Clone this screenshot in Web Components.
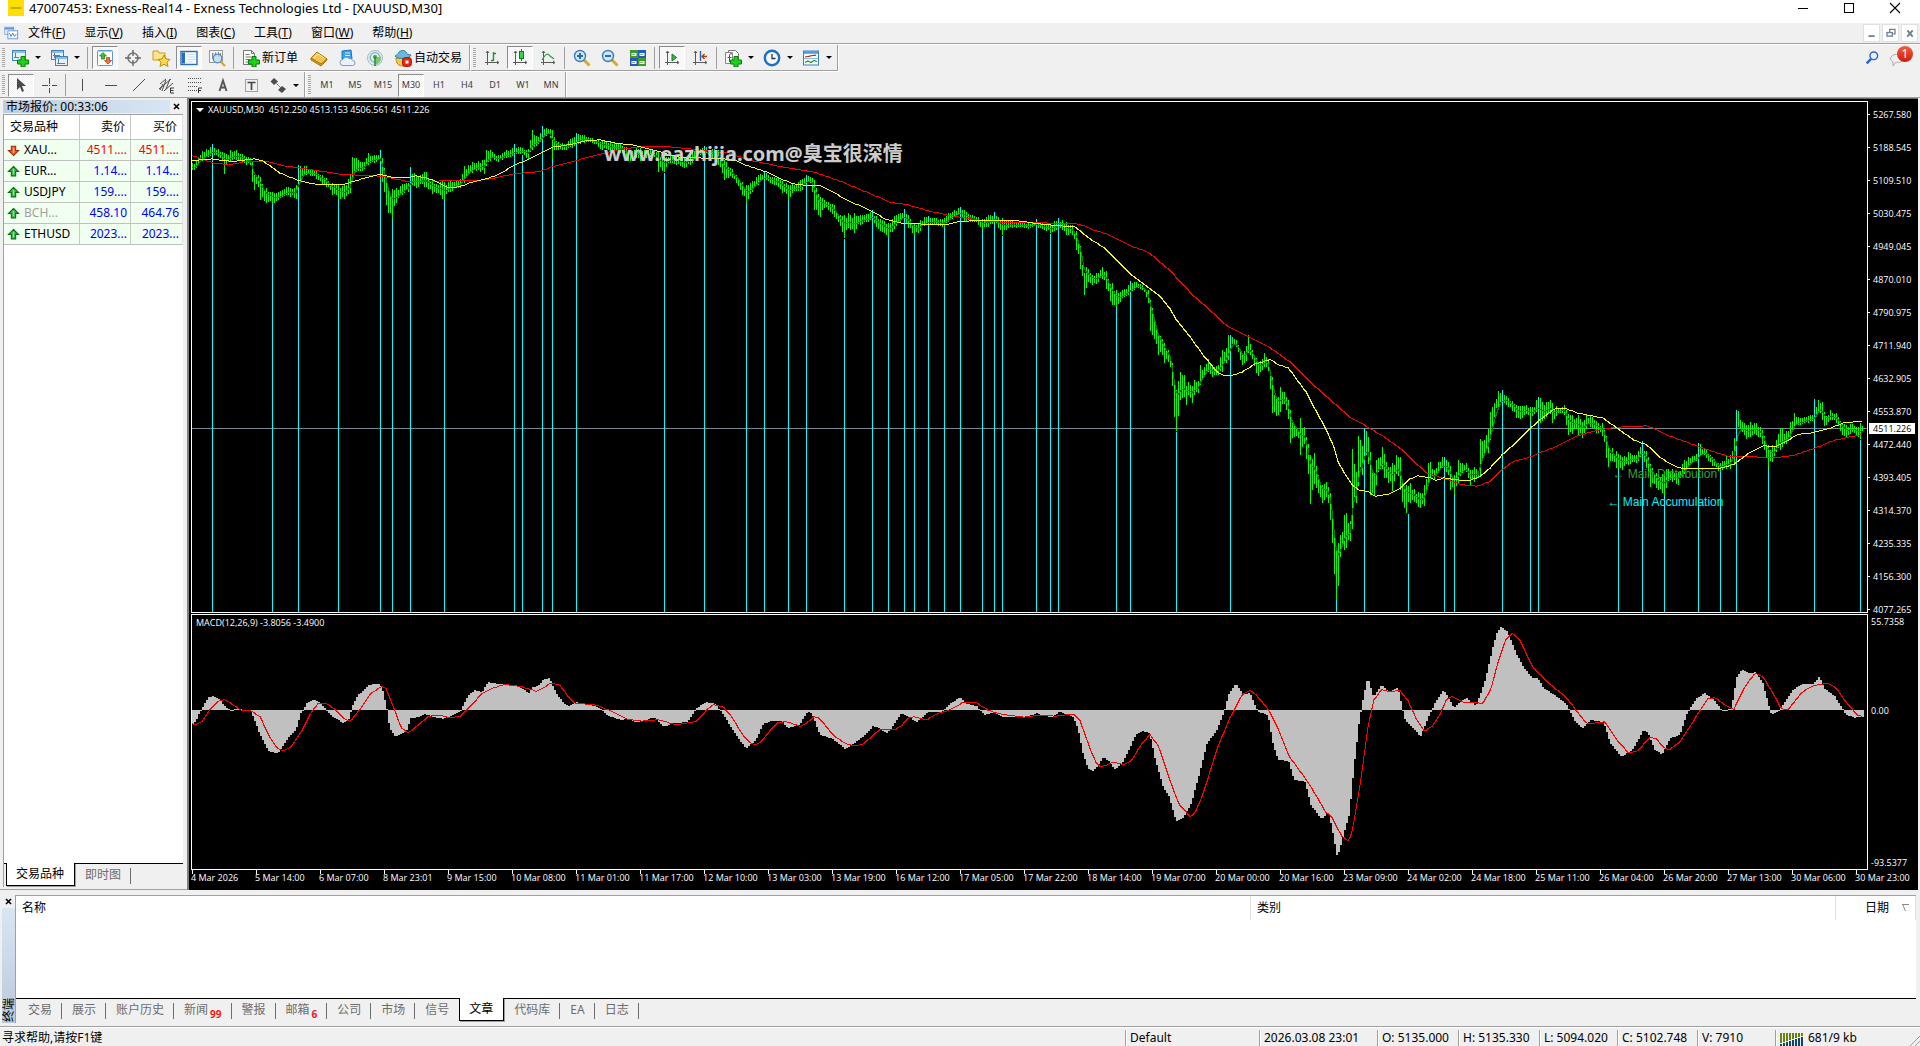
<!DOCTYPE html>
<html lang="zh-CN">
<head>
<meta charset="utf-8">
<title>47007453: Exness-Real14 - Exness Technologies Ltd - [XAUUSD,M30]</title>
<style>
html,body{margin:0;height:100%}
body{overflow:hidden;background:#f0f0f0;color:#000;font:12px/16px "Noto Sans","Noto Sans CJK SC",sans-serif}
</style>
</head>
<body>
<trade-terminal></trade-terminal>
<script>
const RESET = `:host,*{box-sizing:border-box}button{font:inherit;color:inherit;background:none;border:0;margin:0;padding:0;display:flex;align-items:center}svg{display:block}`;

function define(name, markup, setup) {
  customElements.define(name, class extends HTMLElement {
    constructor() {
      super();
      const root = this.attachShadow({ mode: 'open' });
      root.innerHTML = typeof markup === 'function' ? '' : markup;
    }
    connectedCallback() {
      if (typeof markup === 'function') this.shadowRoot.innerHTML = markup(this);
      if (setup) setup(this, this.shadowRoot);
    }
  });
}

/* ---------- icons, on an 18 x 18 grid ---------- */
const PLUS = `<path d="M10 7.500h4v3.500h3.500v4H14v3h-4v-3H6.500v-4H10z" fill="#1fd01f" stroke="#078007"/>`;
const AXES = `<path d="M4.500 2v14M2 13.500h13.500M3 4l1.500-2 1.500 2M14 12l2 1.500-2 1.500" fill="none" stroke="#5a5a5a"/>`;
const ICONS = {
  logo: `<rect width="18" height="18" fill="#ffde02"/><path d="M3 8.500h12M3 9.500h12" stroke="#7c6c10" stroke-opacity=".6" stroke-dasharray="2 .5"/>`,
  mdi: `<rect x="2" y="2.500" width="10" height="8" fill="#eaf2fc" stroke="#7fa6dc"/><path d="M2 4h10" stroke="#5b8fd8" stroke-width="2"/><rect x="5.500" y="6.500" width="11" height="9" fill="#fff" stroke="#5b8fd8"/><path d="M7 9l2 4 2-4 2 4 2-3" fill="none" stroke="#3f78cf"/>`,
  newchart: `<rect x="1.500" y="1.500" width="13" height="10" fill="#e6f1fb" stroke="#3d83ba"/><path d="M2 3h12" stroke="#8dbde3" stroke-width="2"/><path d="M4.500 4v5M3 8.500h5" stroke="#5a7d99"/>${PLUS}`,
  profiles: `<rect x="1.500" y="1.500" width="12" height="9" fill="#e6f1fb" stroke="#3d83ba"/><path d="M2 3h11" stroke="#8dbde3" stroke-width="2"/><rect x="5.500" y="7.500" width="12" height="9" fill="#e6f1fb" stroke="#3d83ba"/><path d="M6 9h11" stroke="#8dbde3" stroke-width="2"/><path d="M8.500 10v5M7 14.500h8M4.500 4v5M3 6.500h7" stroke="#5a7d99" fill="none"/>`,
  watch: `<rect x="1.500" y="1.500" width="15" height="15" rx="1" fill="#fff" stroke="#5e9ad0"/><path d="M2 2.500h14" stroke="#a8ceec"/><path d="M7 3.500l3.500 3.500H8.500v3h-3V7H3.500z" fill="#35c235" stroke="#0b7a0b" stroke-width=".7"/><path d="M12 15l-3.500-3.500h2v-3h3v3h2z" fill="#ff6b3d" stroke="#b12c08" stroke-width=".7"/>`,
  cross: `<circle cx="9" cy="9" r="5" fill="none" stroke="#777" stroke-width="1.600"/><path d="M9 1v6M9 11v6M1 9h6M11 9h6" stroke="#666" stroke-width="1.400"/>`,
  star: `<path d="M1 2h5l1 2h6v7H1z" fill="#ffe68a" stroke="#c99a1c"/><path d="M12 6l2 4 4 .4-3 2.800 1 4.300-4-2.300-4 2.300 1-4.300-3-2.800 4-.4z" fill="#ffd84a" stroke="#bd8a10"/>`,
  navigator: `<rect x="1" y="2.500" width="16" height="13" fill="#f4f9ff" stroke="#2c6fae" stroke-width="1.400"/><rect x="2" y="3.500" width="3" height="11" fill="#276bc0"/><path d="M7.500 5.500h8M7.500 8h8M7.500 10.500h8M7.500 13h5" stroke="#cddff0"/>`,
  tester: `<rect x="1.500" y="1.500" width="13" height="12" fill="#f7f7f7" stroke="#9a9a9a"/><path d="M4.500 4v6M4.500 5h2M7.500 3.500v4M10.500 3v5M12.500 4v3" stroke="#8a8a8a"/><circle cx="9.500" cy="9.500" r="4.300" fill="#b8d9f4" fill-opacity=".8" stroke="#4d8cc8" stroke-width="1.300"/><path d="M13 13l4 4" stroke="#d7a92a" stroke-width="2.400"/>`,
  order: `<path d="M1.500 1.500h8l3 3v11h-11z" fill="#fff" stroke="#777"/><path d="M9.500 1.500v3h3M3.500 5.500h4M3.500 8h6M3.500 10.500h5M3.500 13h3" fill="none" stroke="#777"/>${PLUS}`,
  gold: `<path d="M1 9l6-6 10 7-6 6z" fill="#f4c44c" stroke="#a9761a"/><path d="M1 9v2l10 6 6-6v-1l-6 5z" fill="#d9992b" stroke="#a9761a"/><path d="M4 9l4-4 6 4" fill="none" stroke="#ffe9a3"/>`,
  cloud: `<path d="M4 2l9-1 1 9H4z" fill="#38a0ec" stroke="#1d76bd"/><path d="M7 4h5M7 6.500h5" stroke="#d9efff"/><path d="M5 16.500a3 3 0 0 1 0-6 3.500 3.500 0 0 1 6-1 3 3 0 0 1 3.500 2 2.500 2.500 0 0 1 0 5z" fill="#eaf1fa" stroke="#7e9ac0"/>`,
  signal: `<circle cx="9" cy="9" r="7.500" fill="#e2eeea" stroke="#9dc0bf"/><circle cx="9" cy="8.500" r="4.800" fill="none" stroke="#82b0c9" stroke-width="1.300"/><path d="M9 8v8a7 7 0 0 0 6-8" fill="#7cc57b"/><circle cx="9" cy="8" r="2" fill="#3da33d"/><path d="M9 8v9" stroke="#2b8d2b" stroke-width="1.500"/>`,
  auto: `<path d="M2 9c0 6 3 8 7 8s7-3 7-8z" fill="#f4c94e" stroke="#b68b1e"/><path d="M1 7c2-1 3-2 4-4 2-2 6-2 7 0 1 2 2 3 5 3-1 4-13 5-16 1z" fill="#6ab7dc" stroke="#347fa6"/><rect x="8.500" y="8.500" width="9" height="9" rx="3" fill="#e02a12" stroke="#a81606"/><rect x="11.500" y="11.500" width="3" height="3" fill="#fff"/>`,
  bars: `${AXES}<path d="M10.500 3v9M8 11.500h2.500M10.500 4.500H13" stroke="#1d9230" stroke-width="1.400" fill="none"/>`,
  candle: `${AXES}<path d="M10.500 0v12" stroke="#0c7c1c"/><rect x="8.500" y="2.500" width="4" height="7" fill="#37d150" stroke="#0c7c1c"/>`,
  line: `${AXES}<path d="M3 11c4-7 6-7 8-4l4 3" stroke="#3b9b4a" stroke-width="1.300" fill="none"/>`,
  zoomin: `<path d="M11 11l5.500 5.500" stroke="#d9a92d" stroke-width="3"/><circle cx="7" cy="7" r="5.500" fill="#cfe6f8" stroke="#3a7cbb" stroke-width="1.400"/><path d="M7 4v6M4 7h6" stroke="#2b6ba7" stroke-width="2"/>`,
  zoomout: `<path d="M11 11l5.500 5.500" stroke="#d9a92d" stroke-width="3"/><circle cx="7" cy="7" r="5.500" fill="#cfe6f8" stroke="#3a7cbb" stroke-width="1.400"/><path d="M4 7h6" stroke="#2b6ba7" stroke-width="2"/>`,
  tile: `<rect x="1" y="1" width="8" height="8" fill="#3d9d1e"/><rect x="9" y="1" width="8" height="8" fill="#2458c9"/><rect x="1" y="9" width="8" height="8" fill="#2458c9"/><rect x="9" y="9" width="8" height="8" fill="#3d9d1e"/><path d="M2.500 5.500h5M10.500 5.500h5M2.500 13.500h5M10.500 13.500h5" stroke="#eef6ff" stroke-width="3"/><path d="M3 5.500h3M11 5.500h3M3 13.500h3M11 13.500h3" stroke="#8ab080"/>`,
  scroll: `${AXES}<path d="M9 5l4.500 3.500L9 12z" fill="#2fbf48" stroke="#0d7d21"/>`,
  shift: `${AXES}<path d="M9.500 2v10" stroke="#2c62a5" stroke-width="1.400"/><path d="M16 7.500h-5M13.500 5L11 7.500l2.500 2.500" stroke="#b03d14" stroke-width="1.400" fill="none"/>`,
  indicator: `<path d="M4.500 1.500h7l3 3v9h-10z" fill="#fff" stroke="#777"/><path d="M1.500 3.500h7v11h-7z" fill="#fff" stroke="#888"/><path d="M8 5c-2-1-2.500 0-2.500 2v6M3.500 8.500h4" stroke="#555" fill="none"/>${PLUS}`,
  clock: `<circle cx="9" cy="9" r="7.200" fill="#f3f9ff" stroke="#1d6fc6" stroke-width="2.400"/><path d="M9 5v4.500h3.500" fill="none" stroke="#333" stroke-width="1.300"/>`,
  template: `<rect x="1.500" y="2" width="15" height="14" fill="#f8fcff" stroke="#3d7ebf"/><path d="M2 3.500h14" stroke="#4f97dc" stroke-width="2.500"/><path d="M3 8c3-1 3 0 5-1s4 0 6-1" stroke="#a12c10" stroke-width="1.200" fill="none"/><path d="M2 9.500h14" stroke="#8ebbe4"/><path d="M3 13.500l3-1.500 3 1.500 3-2 3 1" stroke="#22933b" stroke-width="1.200" fill="none"/>`,
  cursor: `<path d="M5 2v12l3-3 2 5 2-1-2-5h4z" fill="#4c4c4c"/>`,
  plus: `<path d="M9.500 2v5.500M9.500 11.500V17M2 9.500h5.500M11.500 9.500H17M9 9.500h1" stroke="#4c4c4c" shape-rendering="crispEdges"/>`,
  vline: `<path d="M8.500 3v12" stroke="#4c4c4c" shape-rendering="crispEdges"/>`,
  hline: `<path d="M3 9.500h12" stroke="#4c4c4c" shape-rendering="crispEdges"/>`,
  trend: `<path d="M3 15L15 3" stroke="#4c4c4c"/>`,
  channel: `<path d="M1 13L13 3M2 8L8 3M6 15l9-8M4 15L8 4M8 13l4-10M2 14l3-6" stroke="#4c4c4c"/><path d="M16 12h-3.500v5H16M12.500 14.500h3" fill="none" stroke="#333"/>`,
  fibo: `<path d="M2 2.500h14M2 6.500h14M2 10.500h9M2 14.500h9" stroke="#4c4c4c" stroke-dasharray="1 1"/><path d="M16 12h-3.500v5M12.500 14.500H15" fill="none" stroke="#333"/>`,
  text: `<path d="M5.500 15L9 4.500 12.500 15M6.500 11.500h5" fill="none" stroke="#555" stroke-width="1.900"/>`,
  label: `<rect x="3.500" y="3.500" width="12" height="12" fill="none" stroke="#555" stroke-dasharray="1 1"/><path d="M5.500 6.500h8M9.500 6.500V14" stroke="#444" stroke-width="1.700"/>`,
  shapes: `<path d="M5 2l4 3.500L5 9 1.500 5.500z" fill="#4c4c4c"/><path d="M6 6l6 6" stroke="#4c4c4c" stroke-dasharray="2 1"/><path d="M13 10l4 3-4 4-4-3z" fill="#4c4c4c"/>`,
  up: `<path d="M9 2l7 7h-4v6H6V9H2z" fill="#35b043" stroke="#0d6c18" stroke-width="1.500"/><path d="M9 5v8" stroke="#8fe09a" stroke-width="2"/>`,
  down: `<path d="M9 16l7-7h-4V3H6v6H2z" fill="#f0572c" stroke="#9b2c0a" stroke-width="1.500"/><path d="M9 5v8" stroke="#ffa98b" stroke-width="2"/>`,
  min: `<path d="M4 9.500h10" stroke="#000" shape-rendering="crispEdges"/>`,
  max: `<rect x="4.500" y="4.500" width="9" height="9" fill="none" stroke="#000" shape-rendering="crispEdges"/>`,
  close: `<path d="M4 4l10 10M14 4L4 14" stroke="#000" stroke-width="1.100"/>`,
  cmin: `<path d="M5 12.500h7" stroke="#6f8196" stroke-width="2"/>`,
  crest: `<path d="M7.500 8V5h6v5h-2" fill="none" stroke="#6f8196" stroke-width="1.500"/><rect x="4.500" y="8.500" width="6" height="4" fill="none" stroke="#6f8196" stroke-width="1.500"/>`,
  cclose: `<path d="M6 6l6 7M12 6l-6 7" stroke="#6f8196" stroke-width="2.200"/>`,
  x: `<path d="M5.500 5.500l7 7M12.500 5.500l-7 7" stroke="#000" stroke-width="2.200"/>`,
  find: `<circle cx="11" cy="6.500" r="4.300" fill="#eaf2ff" stroke="#2a64d2" stroke-width="1.600"/><path d="M8 10l-5 5" stroke="#2a64d2" stroke-width="2.800"/>`,
  chat: `<path d="M3 6c3-3 10-2 11 2 0 4-4 5-7 4l-3 4 0-4c-3-2-3-4-1-6z" fill="#f2f2f4" stroke="#a9a9ae"/>`
};

define('mt-icon', el => {
  const s = el.getAttribute('size') || 18;
  return `<style>:host{display:inline-block;flex:none;width:${s}px;height:${s}px}svg{display:block}</style>
  <svg viewBox="0 0 18 18" width="${s}" height="${s}" aria-hidden="true">${ICONS[el.getAttribute('name')]}</svg>`;
});

define('title-bar', `<style>${RESET}
:host{display:flex;flex:none;height:23px;background:#fff;align-items:flex-start;padding-left:8px}
mt-icon{margin-right:5px}.t{flex:1;font-size:13px;line-height:16px}
button{width:46px;height:16px;justify-content:center}.w{display:flex}
</style><mt-icon name="logo" size="16"></mt-icon><span class="t"><slot></slot></span>
<div class="w"><button aria-label="最小化"><mt-icon name="min"></mt-icon></button><button aria-label="最大化"><mt-icon name="max"></mt-icon></button><button aria-label="关闭"><mt-icon name="close"></mt-icon></button></div>`);

define('menu-bar', () => {
  const items = [['文件','F'],['显示','V'],['插入','I'],['图表','C'],['工具','T'],['窗口','W'],['帮助','H']];
  return `<style>${RESET}
:host{display:flex;flex:none;height:22px;padding:0 2px 2px 3px;align-items:center;box-shadow:inset 0 -1px #fff,inset 0 -2px #a0a0a0}
nav{display:flex;flex:1}nav button{padding:0 10px 0 9px;height:20px;line-height:16px}
.w{display:flex;gap:2px}.w button{width:17px;height:18px;background:#fff;border:1px solid #e0e0e0;justify-content:center}
</style><mt-icon name="mdi" size="16"></mt-icon><nav>${items.map(([t,k]) => `<button><span>${t}(<u>${k}</u>)</span></button>`).join('')}</nav>
<div class="w"><button aria-label="最小化图表"><mt-icon name="cmin" size="16"></mt-icon></button><button aria-label="还原图表"><mt-icon name="crest" size="16"></mt-icon></button><button aria-label="关闭图表"><mt-icon name="cclose" size="16"></mt-icon></button></div>`;
});

define('tool-group', `<style>${RESET}
:host{display:flex;flex:none;align-items:center;padding-left:2px;border-right:1px solid #a0a0a0;border-bottom:1px solid #a0a0a0;box-shadow:1px 1px #fff;margin:0 1px 1px 0}
:host([last-row]){border-bottom:0;box-shadow:1px 0 #fff;margin-bottom:0;padding-top:1px}
.g{width:3px;height:20px;margin-right:2px;background:repeating-linear-gradient(#a8a8a8 0 1px,#f0f0f0 1px 2px)}
</style><span class="g"></span><slot></slot>`);

define('tool-sep', `<style>:host{display:block;flex:none;width:6px;height:22px;background:linear-gradient(#a0a0a0,#a0a0a0) 2px 0/1px 100% no-repeat}</style>`);

define('tool-button', el => `<style>${RESET}
:host{display:block;flex:none;padding:0 1px}
button{height:23px;min-width:26px;justify-content:center;gap:2px;white-space:nowrap}
button.on{background:repeating-conic-gradient(#fff 0 25%,#f0f0f0 0 50%) 0 0/2px 2px;border:1px solid;border-color:#8c8c8c #fff #fff #8c8c8c}
button.drop{width:37px;padding-left:3px;justify-content:flex-start;gap:6px}
button.wide{padding:0 6px 0 4px}
button.tf{font-size:9px;color:#3c3c3c}
i{border:3px solid transparent;border-top:3px solid #000;border-bottom:0;width:6px}
</style><button class="${el.getAttribute('kind') || ''} ${el.hasAttribute('pressed') ? 'on' : ''}" aria-label="${el.getAttribute('label') || el.textContent || el.getAttribute('icon')}">${el.getAttribute('icon') ? `<mt-icon name="${el.getAttribute('icon')}"></mt-icon>` : ''}<slot></slot>${el.getAttribute('kind') === 'drop' ? '<i></i>' : ''}</button>`);

const b = (icon, kind = '', text = '', pressed = '') => `<tool-button ${icon ? `icon="${icon}"` : ''} kind="${kind}" ${pressed}>${text}</tool-button>`;
const SEP = '<tool-sep></tool-sep>';

define('tool-bars', () => `<style>${RESET}
:host{display:flex;flex:none;height:53px;border-bottom:1px solid #a0a0a0}
.rows{flex:1;display:flex;flex-direction:column}.r{display:flex}.a{height:27px}.b{height:25px}
.end{display:flex;padding:5px 13px 0 0;gap:9px;align-items:flex-start}
.msg{display:block;position:relative}
.n{position:absolute;left:8px;top:-4px;width:16px;height:16px;border-radius:8px;background:linear-gradient(#f0603e,#d01c08);color:#fff;line-height:16px;text-align:center}
</style><div class="rows"><div class="r a">
<tool-group>${b('newchart','drop')}${b('profiles','drop')}${SEP}${b('watch','','','pressed')}${b('cross')}${b('star')}${b('navigator','','','pressed')}${b('tester')}${SEP}${b('order','wide','新订单')}${b('gold')}${b('cloud')}${b('signal')}${b('auto','wide','自动交易')}</tool-group>
<tool-group>${b('bars')}${b('candle','','','pressed')}${b('line')}${SEP}${b('zoomin')}${b('zoomout')}${b('tile')}${SEP}${b('scroll','','','pressed')}${b('shift')}${SEP}${b('indicator','drop')}${b('clock','drop')}${b('template','drop')}</tool-group>
</div><div class="r b">
<tool-group last-row>${b('cursor','','','pressed')}${b('plus')}${SEP}${b('vline')}${b('hline')}${b('trend')}${b('channel')}${b('fibo')}${b('text')}${b('label')}${b('shapes','drop')}</tool-group>
<tool-group last-row>${['M1','M5','M15','M30','H1','H4','D1','W1','MN'].map(t => b('','tf',t,t === 'M30' ? 'pressed' : '')).join('')}</tool-group>
</div></div>
<div class="end"><button aria-label="搜索"><mt-icon name="find" size="16"></mt-icon></button><button class="msg" aria-label="消息"><mt-icon name="chat"></mt-icon><span class="n">1</span></button></div>`);

/* ---------- tab strip shared by both panels ---------- */
define('tab-strip', el => {
  const active = el.getAttribute('active');
  return `<style>${RESET}
:host{display:flex;height:23px;border-top:1px solid #000;color:#6d6d6d;padding-left:2px}
button{position:relative;height:22px;padding:0 10px;line-height:16px}
button::after{content:"";position:absolute;right:0;top:4px;height:16px;border-right:1px solid #6d6d6d}
button.on{background:#fff;color:#000;border:1px solid #000;border-top:0;margin-top:-1px;height:23px;box-shadow:1px 1px #a0a0a0;padding:0 10px 0 9px}
button.on::after,button.pre::after{display:none}
small{font:bold 10px/12px "Noto Sans",sans-serif;color:#f01818;margin:8px 0 0 2px}
</style>${el.getAttribute('tabs').split(',').map((t, i, all) => {
    const [name, n] = t.split(':');
    const next = all[i + 1] === active;
    return `<button role="tab" class="${name === active ? 'on' : next ? 'pre' : ''}">${name}${n ? `<small>${n}</small>` : ''}</button>`;
  }).join('')}`;
});

define('market-watch', () => {
  const rows = [['down','XAU...','4511....','4511....','r'],['up','EUR...','1.14...','1.14...','b'],['up','USDJPY','159....','159....','b'],['up','BCH...','458.10','464.76','b g'],['up','ETHUSD','2023...','2023...','b']];
  return `<style>${RESET}
:host{display:flex;flex-direction:column;flex:none;width:187px;padding:2px 4px 3px 3px;box-shadow:inset 0 -1px #a0a0a0}
header{display:flex;height:14px;flex:none}
h2{flex:1;margin:0;padding-left:3px;font-size:12px;font-weight:400;line-height:13px;height:13px;background:linear-gradient(90deg,#bdcddc,#d8e6f4)}
header button{width:13px;justify-content:center;height:13px}
.body{flex:1;display:flex;flex-direction:column;background:#fff;border:1px solid #a0a0a0;border-width:1px 0 0 1px}
table{border-collapse:separate;border-spacing:0;table-layout:fixed;width:100%}
th{font-weight:400;height:25px}th,td{padding:0 3px 0 0;border-right:1px solid #c8c8c8;border-bottom:1px solid #c0c0c0;text-align:right;white-space:nowrap;overflow:hidden}
th:last-child,td:last-child{border-right-color:#e4e4e4}
th{padding-right:5px}th:first-child{text-align:left;padding-left:6px}
td{height:21px;background:#f0fff0}
td:first-child{text-align:left;padding:0}td:first-child div{display:flex;align-items:center;gap:4px;padding-left:3px}
.r td+td{color:#f00}.b td+td{color:#00f}.g div{color:#a0a0a0}
.fill{flex:1}
.tabs{background:#f0f0f0;height:24px;flex:none}
</style><header><h2>市场报价: 00:33:06</h2><button aria-label="关闭"><mt-icon name="x" size="13"></mt-icon></button></header>
<div class="body"><table><colgroup><col style="width:76px"><col style="width:51px"><col></colgroup><thead><tr><th>交易品种</th><th>卖价</th><th>买价</th></tr></thead><tbody>
${rows.map(r => `<tr class="${r[4]}"><td><div><mt-icon name="${r[0]}" size="13"></mt-icon>${r[1]}</div></td><td>${r[2]}</td><td>${r[3]}</td></tr>`).join('')}</tbody></table><div class="fill"></div>
<div class="tabs"><tab-strip tabs="交易品种,即时图" active="交易品种"></tab-strip></div></div>`;
});

/* ---------- chart data: blocks of origin x, origin y, units per pixel (x), then points, y in thirds ---------- */
const parse = (cols, ...blocks) => blocks.flatMap(([ox, oy, sx, text]) => text.split(';').map(p => {
  const v = p.trim().split(/[ ,]+/).map(Number);
  return [ox + v[0] / sx, ...v.slice(1, cols).map(y => oy + y / 3)];
}));

const RANGE = parse(3,
 [190,100,3,`6,190,212;20,180,205;35,155,185;67,137,165;85,148,172;100,158,185;103,158,225;106,165,200;121,150,185;140,150,180;160,165,190;186,168,200;188,200,275;205,225,260;211,230,300;230,265,310;247,275,312;265,275,300;290,262,285;319,258,297;325,197,265;345,197,225;370,208,230;395,222,250;410,235,262;427,250,285;445,255,297;465,255,297;481,225,280;488,165,240;500,175,215;520,188,212;535,160,195;560,165,185;571,152,185;577,172,245;590,235,320;597,275,345;607,268,357;620,265,305;640,250,280;655,250,275;661,203,262;680,225,265;709,215,260;730,245,285;763,245,300;780,240,275;810,240,265;823,198,250;850,185,215;883,180,222;890,145,195;903,150,180;925,165,185;950,150,175;973,140,165;990,142,160;1015,148,178;1027,90,150;1045,112,132;1057,80,122;1080,85,100;1087,88,177;1093,110,150;1105,125,150;1125,132,150;1145,115,145;1159,102,135;1185,105,130;1210,115,130;1235,122,150;1260,125,155;1285,130,150;1310,140,185;1340,145,175`],
 [640,100,3,`0,145,185;30,150,170;48,155,175;55,155,215;73,165,215;90,165,190;110,165,195;135,170,205;150,160,195;168,138,180;193,140,165;215,145,170;235,150,195;253,180,240;275,205,230;290,225,250;310,250,290;319,255,310;340,240,270;355,225,255;373,215,240;395,230,250;415,235,260;430,245,285;445,255,300;460,252,275;485,240,275;499,225,250;515,230,255;523,240,330;541,290,352;555,300,320;580,312,345;600,345,375;613,345,415;625,340,385;643,340,400;660,345,375;680,342,365;697,335,365;712,350,385;745,370,413;765,345,385;780,340,365;793,330,360;805,345,385;823,370,407;840,360,395;855,350,375;880,355,375;913,355,385;925,340,365;945,330,350;961,322,345;975,330,370;995,345,365;1015,350,375;1027,358,386;1045,345,380;1063,340,365;1087,355,405;1105,362,385;1140,368,380;1165,370,388;1189,362,378;1210,370,390;1231,375,400;1255,355,385;1280,365,405;1300,378,405;1310,395,455;1322,440,510;1333,520,585;1340,500,560;1357,525,555;1370,520,552;1387,500,535;1397,510,560;1415,545,615;1429,570,620`],
 [1060,200,3,`181,275,305;195,265,290;211,250,285;230,245,262;250,258,270;265,270,305;271,300,392;283,350,415;295,400,465;307,418,465;313,430,490;325,450,485;335,470,525;343,540,650;349,570,696;355,545,650;361,515,600;373,525,590;379,560,615;385,545,585;397,560,610;403,540,585;415,545,580;421,495,555;433,500,525;445,478,515;457,500,530;475,495,525;487,450,515;499,445,490;505,405,480;517,410,432;530,422,440;541,450,480;549,460,500;559,440,485;565,405,460;577,450,475;589,475,520;597,490,530;613,458,500;625,475,510;637,530,640;650,595,650;661,560,635;673,575,610;685,600,655;691,630,728;703,675,712;715,690,712;721,655,765;733,680,730;745,730,820;752,770,925;763,757,850;775,825,880;787,855,908;800,845,890;810,870,945;817,930,1025;823,1010,1120;829,1043,1200;835,1030,1160;841,1005,1070;853,945,1050;859,937,1045;871,970,1025;877,745,990;883,790,890;889,820,910;895,708,860;901,720,800;907,740,825;913,690,790;919,693,765;925,710,790;931,755,885;943,820,890;950,775,850;967,740,805;973,760,835;985,800,850;997,790,875;1009,765,820;1021,768,870;1028,850,910;1040,855,942;1051,850,910;1063,868,905;1081,880,925;1093,855,920;1105,790,860;1111,785,835;1123,810,840;1135,785,820;1147,770,805;1165,785,825;1172,800,875;1183,825,885;1195,780,850;1207,788,820;1220,790,815;1232,810,860;1243,800,845;1255,815,830;1261,717,830;1273,720,760;1285,690,760;1291,635,720;1303,610,650;1315,572,625;1327,575,600;1340,590,615;1355,600,630;1370,615,655;1390,620,655;1400,615,640;1411,620,662;1425,620,640;1430,595,635`],
 [1440,340,3,`295,173,215;301,175,250;310,190,240;319,185,230;331,180,220;337,190,250;350,200,225;373,195,225;387,225,295;400,225,280;415,225,285;427,245,295;440,222,265;455,230,260;470,245,280;490,250,290;500,290,360;506,330,385;518,325,360;530,335,385;547,350,390;565,335,375;590,345,370;607,307,345;620,335,385;630,370,440;650,400,445;665,405,455;673,395,465;680,385,440;695,385,425;715,395,435;730,365,405;745,350,380;775,340,360;780,312,345;800,330,355;820,355,380;841,370,398;860,348,385;872,345,388;884,290,370;889,215,330;895,212,262;907,245,275;919,255,298;931,245,290;950,248,285;965,265,305;985,315,380;997,315,365;1010,300,335;1022,260,330;1040,275,310;1052,245,290;1063,220,265;1080,235,255;1105,228,248;1123,220,245;1135,180,215;1147,185,240;1155,225,265;1172,208,240;1190,220,250;1205,250,285;1220,255,290;1240,250,275;1250,262,290;1261,248,298;1268,260,270`]);

const SLOW = parse(2,
 [190,100,3,`6,165;67,187;120,193;170,182;230,182;290,197;360,207;460,222;571,227;661,244;800,240;860,240;900,235;973,220;1050,213;1087,198;1159,180;1240,158;1300,145;1350,139`],
 [640,100,3,`90,139;193,150;270,158;330,180;373,188;430,200;520,214;600,242;697,282;750,305;800,312;870,332;930,345;1000,357;1040,362;1100,366;1260,368`],
 [1060,200,3,`60,71;100,88;150,104;211,136;265,155;330,210;360,243;400,285;440,320;500,375;565,408;625,438;690,484;760,553;830,615;870,650;915,675;970,708;1030,750;1070,790;1100,817;1150,833;1200,852;1250,857;1290,843;1320,812;1360,783;1411,769`],
 [1440,340,3,`295,338;350,318;410,287;470,270;530,260;620,256;650,268;690,287;740,305;800,327;870,349;940,349;1000,352;1060,345;1120,325;1180,300;1265,282`]);

const FAST = parse(2,
 [190,100,3,`6,180;67,175;100,181;140,182;190,175;220,182;270,218;325,240;380,252;460,252;500,240;540,228;571,221;610,232;650,232;680,226;715,234;745,246;775,263;810,258;850,244;890,235;920,224;973,195;1020,174;1057,154;1087,140;1140,132;1190,121;1230,118;1280,128;1340,135`],
 [640,100,3,`0,139;40,148;90,163;130,172;240,173;290,181;320,195;373,212;420,234;460,250;490,254;535,254;580,275;620,298;680,325;740,357;790,369;860,371;920,372;960,363;1030,359;1120,359;1200,370`],
 [1060,200,3,`0,76;45,79;90,115;130,140;180,188;211,220;250,250;300,288;330,325;349,358;390,408;430,465;470,512;490,526;510,526;545,516;580,493;630,477;655,492;685,502;740,577;770,635;800,690;820,735;835,785;860,830;880,857;900,870;925,873;945,888;990,880;1020,865;1050,835;1075,826;1110,832;1130,840;1150,832;1190,838;1230,840;1260,828;1290,803;1327,762;1370,725;1411,683`],
 [1440,340,3,`310,230;345,204;375,203;410,217;490,233;530,262;580,298;620,313;660,350;690,370;725,384;840,384;880,372;930,335;970,316;1010,318;1040,302;1075,281;1110,278;1170,264;1215,245;1265,244`]);

const HIST = parse(2,
 [190,600,2.703,`5,375;15,365;30,330;50,292;65,288;80,297;95,320;113,333;125,326;165,333;190,405;215,457;240,458;265,415;287,390;300,340;318,307;333,300;350,305;370,330;385,350;415,369;430,357;440,315;455,285;485,255;510,250;520,265;533,330;540,385;555,410;585,395;598,353;620,352;635,342;655,350;685,357;730,335;750,290;770,270;790,278;805,246;835,252;885,257;918,280;925,262;940,258;958,237;972,235;990,280;1015,315;1025,318;1045,307;1080,313;1110,325;1130,347;1165,360;1185,355;1205,367;1225,362;1255,352;1280,381;1305,370;1345,366;1370,325;1395,306;1420,312;1440,340;1470,395;1503,446;1530,420;1550,372`],
 [640,620,3,`395,302;425,303;445,325;480,313;500,278;512,277;520,290;540,345;575,355;605,378;618,388;635,373;655,362;680,340;700,318;720,325;740,340;755,325;785,280;805,290;830,306;865,277;905,277;930,252;960,231;980,252;1010,258;1035,285;1065,277;1085,290;1160,290;1190,280;1235,293;1260,275;1300,290;1315,330;1330,405;1345,445;1360,455`],
 [1050,600,1.802,`85,500;97,470;107,485;118,510;130,490;145,440;155,405;168,393;180,400;190,480;205,565;215,590;227,663;240,655;255,610;268,530;283,430;300,395;313,340;322,285;335,249;348,285;360,278;375,335;393,345;402,430;411,480;430,483;440,540;460,545;470,615;490,658;502,635;510,700;518,773;530,700;540,640;548,500;557,370;565,290;573,231;583,292;598,255;610,275;627,262;640,360;655,385;668,410;680,360;695,305;710,270;728,322;750,293;768,318;783,250;797,150;805,100;813,80;825,95;840,160;855,205;870,235;880,235;890,265;910,285;930,310;945,360;960,385;975,360;998,367;1010,430;1030,470;1050,450;1070,390;1078,400;1090,450;1103,463;1118,415;1135,405;1148,340;1165,295;1180,280;1195,297;1213,335;1228,325;1238,230;1247,210;1260,220;1272,217;1285,250;1300,345;1315,330;1340,268;1355,253;1375,253;1387,230;1395,265;1415,290;1435,345;1450,353;1463,350`]);

const SIGNAL = parse(2,
 [190,600,2.703,`5,370;15,373;35,360;55,325;75,303;92,298;110,308;135,328;168,332;190,350;215,410;235,442;253,452;275,437;300,395;325,340;345,310;370,308;395,330;420,358;435,360;460,325;490,278;518,258;530,265;550,320;570,380;590,398;610,380;645,347;680,345;700,352;730,347;760,315;790,278;820,262;850,252;890,257;935,272;955,262;975,247;1000,255;1020,285;1040,310;1090,311;1130,328;1180,355;1220,362;1265,358;1315,373;1370,362;1400,325;1415,313;1440,318;1465,350;1495,405;1515,427;1530,433;1545,422;1568,390`],
 [640,620,3,`415,305;440,304;480,317;500,308;520,289;535,290;560,320;580,345;615,368;645,377;670,370;720,327;765,328;785,315;805,293;820,289;860,298;890,280;930,268;970,245;1010,247;1045,270;1090,282;1150,290;1200,284;1250,287;1300,280;1320,300;1345,370;1367,425;1382,440`],
 [1050,600,1.802,`92,499;115,485;133,493;148,478;163,435;180,403;195,435;212,520;232,610;252,647;260,640;275,585;300,450;322,360;345,285;360,270;370,280;395,330;410,380;430,465;465,545;497,635;508,650;525,705;538,722;545,690;560,540;572,390;583,300;597,267;610,273;630,270;645,300;660,355;675,392;690,375;702,345;715,295;725,289;745,305;780,308;795,265;808,180;822,115;833,98;845,115;872,205;900,250;930,290;955,345;968,370;1000,364;1022,420;1043,458;1060,450;1080,412;1092,413;1105,440;1115,449;1135,425;1160,360;1185,295;1198,291;1215,312;1232,328;1250,265;1270,218;1285,230;1300,270;1318,325;1330,327;1355,275;1375,257;1400,247;1415,260;1435,305;1455,345;1463,347`]);

const CYCLES = [[212,144],[272,204],[298,165],[338,199],[380,150],[392,219],[410,167],[444,200],[514,144],[522,155],[542,126],[552,159],[576,133],[664,173],[704,146],[746,203],[764,171],[788,200],[806,175],[844,239],[872,210],[888,238],[904,209],[914,236],[928,216],[944,228],[960,207],[982,229],[994,212],[1002,236],[1036,219],[1050,234],[1058,218],[1116,307],[1130,281],[1176,432],[1230,335],[1336,600],[1364,428],[1408,514],[1444,457],[1454,495],[1502,390],[1530,421],[1538,397],[1618,469],[1642,441],[1664,495],[1698,443],[1720,472],[1736,410],[1768,467],[1814,399],[1860,440]];

function at(series, x, k = 1) {
  if (x <= series[0][0]) return series[0][k];
  for (let i = 1; i < series.length; i++) {
    const a = series[i - 1], c = series[i];
    if (x <= c[0]) return a[k] + (c[k] - a[k]) * (x - a[0]) / (c[0] - a[0] || 1);
  }
  return series[series.length - 1][k];
}
const noise = n => { const v = Math.sin(n * 12.9898) * 43758.5453; return v - Math.floor(v); };
const path = series => series.map((p, i) => (i ? 'L' : 'M') + p[0].toFixed(1) + ' ' + (Math.round(p[1]) + .5)).join('');
const sample = series => { const out = []; for (let x = 192; x <= 1862; x += 2) out.push([x, at(series, x)]); return out; };

define('price-chart', () => {
  let bars = '', hist = '';
  const mids = [];
  let ema = null;
  for (let x = 192; x <= 1862; x += 2) {
    let hi = at(RANGE, x + .4), lo = at(RANGE, x + .4, 2);
    const h = lo - hi, key = RANGE.some(p => Math.abs(p[0] - x - .4) < 1);
    if (!key) { hi += noise(x) * h * .32 - .5; lo -= noise(x + 7) * h * .32 - .5; }
    hi = Math.round(hi); lo = Math.max(hi + 3, Math.round(lo));
    bars += `M${x} ${hi}h1V${lo}h-1z`;
    const mid = (hi + lo) / 2;
    ema = ema === null ? mid : ema + (mid - ema) * .4;
    mids.push([x, ema]);
    const y = Math.round(at(HIST, x + 1));
    hist += y < 710 ? `M${x} ${y}h2V710h-2z` : `M${x} 710h2V${Math.max(y, 711)}h-2z`;
  }
  const cycles = CYCLES.map(([x, y]) => `M${x} ${y}h1V612h-1z`).join('');
  const prices = ['5267.580','5188.545','5109.510','5030.475','4949.045','4870.010','4790.975','4711.940','4632.905','4553.870','4472.440','4393.405','4314.370','4235.335','4156.300','4077.265'];
  const dates = ['4 Mar 2026','5 Mar 14:00','6 Mar 07:00','8 Mar 23:01','9 Mar 15:00','10 Mar 08:00','11 Mar 01:00','11 Mar 17:00','12 Mar 10:00','13 Mar 03:00','13 Mar 19:00','16 Mar 12:00','17 Mar 05:00','17 Mar 22:00','18 Mar 14:00','19 Mar 07:00','20 Mar 00:00','20 Mar 16:00','23 Mar 09:00','24 Mar 02:00','24 Mar 18:00','25 Mar 11:00','26 Mar 04:00','26 Mar 20:00','27 Mar 13:00','30 Mar 06:00','30 Mar 23:00'];
  return `<style>${RESET}
:host{display:flex;flex-direction:column;flex:1;min-width:0;background:#000;color:#fff;border:solid #696969;border-width:1px 0 0 2px;border-left-color:#808080;margin-right:2px;padding:2px 0 0 2px;font:9px/12px "Open Sans","Noto Sans",sans-serif}
.row{display:grid;grid-template:minmax(0,1fr)/minmax(0,1fr) 50px;min-height:0}
.p{flex:2 1 0}.m{flex:1 1 0;margin-top:1px}
.pane{position:relative;border:1px solid #fff;min-height:0}
svg{position:absolute;inset:0;width:100%;height:100%}
.cap{position:absolute;left:4px;top:2px;display:flex;align-items:center;gap:4px;white-space:pre}
.cap i{border:4px solid transparent;border-top-color:#fff;border-bottom:0}
.mark{position:absolute;left:24.600%;top:7.500%;font:bold 20px/28px "Noto Sans","Noto Sans CJK SC",sans-serif;color:#ccc;white-space:nowrap}
.note{position:absolute;font:12px/14px "Liberation Sans",sans-serif;white-space:nowrap}
.dist{left:84.800%;top:71.500%;color:#2fa32f}.acc{left:84.500%;top:77.000%;color:#00f0f8}
.axis{position:relative;display:flex;flex-direction:column;justify-content:space-between;margin:-3px 0 -13px}
.axis span{display:flex;align-items:center;gap:3px;height:33px}
.axis span::before{content:"";width:2px;height:1px;background:#fff}
.axis b{position:absolute;left:1px;right:3px;top:325px;padding-left:4px;height:11px;line-height:11px;background:#fff;color:#000;font-weight:400}
.axis.s{margin:0;padding:2px 0 1px 3px}.axis.s span{height:12px}.axis.s span::before{display:none}
.axis.s .zero{margin-bottom:64px}
.dates{display:flex;height:20px;flex:none;overflow:hidden}
.dates span{flex:0 0 64px;white-space:nowrap;padding-top:2px;background:linear-gradient(#fff,#fff) 1px 0/1px 4px no-repeat}
</style>
<div class="row p"><div class="pane"><svg viewBox="192 102 1675 510" preserveAspectRatio="none" shape-rendering="crispEdges" fill="none">
<path d="M192 428h1675v1H192z" fill="#778899"/><path d="${bars}" fill="#00ff00"/><path d="${cycles}" fill="#00ffff"/>
<path d="${path(mids)}" stroke="#007c00"/><path d="${path(sample(SLOW))}" stroke="#ff0000"/><path d="${path(sample(FAST))}" stroke="#ffff00"/></svg>
<div class="cap"><i></i><span>XAUUSD,M30  4512.250 4513.153 4506.561 4511.226</span></div>
<div class="mark">www.eazhijia.com@臭宝很深情</div><div class="note dist">← Main Distribution</div><div class="note acc">← Main Accumulation</div></div>
<div class="axis">${prices.map(p => `<span>${p}</span>`).join('')}<b>4511.226</b></div></div>
<div class="row m"><div class="pane"><svg viewBox="192 615 1675 254" preserveAspectRatio="none" shape-rendering="crispEdges" fill="none"><path d="${hist}" fill="#c0c0c0"/><path d="${path(sample(SIGNAL))}" stroke="#ff0000"/></svg>
<div class="cap">MACD(12,26,9) -3.8056 -3.4900</div></div>
<div class="axis s"><span>55.7358</span><span class="zero">0.00</span><span>-93.5377</span></div></div>
<div class="dates">${dates.map(d => `<span>${d}</span>`).join('')}</div>`;
});

define('terminal-panel', `<style>${RESET}
:host{display:flex;flex:none;height:137px;padding:5px 4px 3px 0;border-bottom:1px solid #a0a0a0}
aside{width:15px;display:flex;flex-direction:column;align-items:center;padding:0 0 0 1px}
aside button{height:13px;width:13px;justify-content:center;flex:none}
.side{flex:1;width:13px;writing-mode:vertical-rl;text-orientation:sideways;transform:rotate(180deg);font-size:12px;line-height:13px;background:linear-gradient(#bac9d9,#d8e6f4);padding-top:1px}
.main{flex:1;display:flex;flex-direction:column;border:1px solid #a0a0a0;border-width:1px 0 0 1px}
.list{flex:1;background:#fff}
table{width:100%;border-spacing:0;table-layout:fixed}th{font-weight:400;text-align:left;height:24px;padding:0 6px;border-right:1px solid #e0e0e0}
th:last-child div{display:flex;justify-content:flex-end;align-items:center;gap:13px}
.tabs{height:25px}
</style><aside><button aria-label="关闭"><mt-icon name="x" size="13"></mt-icon></button><div class="side">终端</div></aside>
<div class="main"><div class="list"><table><colgroup><col><col style="width:585px"><col style="width:80px"></colgroup><thead><tr><th>名称</th><th>类别</th><th><div>日期<svg width="7" height="8" viewBox="0 0 7 8"><path d="M0 .5h7M.5 0L3.500 7" stroke="#8a8a8a" fill="none"/></svg></div></th></tr></thead></table></div>
<div class="tabs"><tab-strip tabs="交易,展示,账户历史,新闻:99,警报,邮箱:6,公司,市场,信号,文章,代码库,EA,日志" active="文章"></tab-strip></div></div>`);

define('status-bar', () => {
  const cells = [['Default',134],['2026.03.08 23:01',118],['O: 5135.000',81],['H: 5135.330',81],['L: 5094.020',78],['C: 5102.748',80],['V: 7910',78]];
  return `<style>${RESET}
:host{display:flex;flex:none;height:19px;padding-top:2px;border-top:1px solid #fff;white-space:nowrap;line-height:16px}
span{padding-left:4px;border-left:1px solid #a0a0a0;box-shadow:inset 1px 0 #fff;flex:none;height:16px}
.hint{flex:1;border:0;box-shadow:none;padding-left:2px}
.net{width:145px;display:flex;gap:4px;position:relative}.net svg{margin-top:2px}
.net .grip{position:absolute;right:0;bottom:0;margin:0}
</style><span class="hint">寻求帮助,请按F1键</span>${cells.map(([t, w]) => `<span style="width:${w}px">${t}</span>`).join('')}<span class="net"><svg width="24" height="14" viewBox="0 0 24 14" shape-rendering="crispEdges"><path d="M1 1v10M4 1v9M7 1v8M10 1v7M13 1v6M16 1v5M19 1v4M22 1v3" stroke="#6b8010" stroke-width="2"/><path d="M1 14v-2M4 14v-3M7 14v-4M10 14V9M13 14V8M16 14V7M19 14V6M22 14V5" stroke="#0c4668" stroke-width="2"/></svg>681/9 kb<svg class="grip" width="10" height="12" viewBox="0 0 10 12"><path d="M0 12L12 0M5 12l8-8" stroke="#a0a0a0"/></svg></span>`;
});

define('trade-terminal', `<style>:host{display:flex;flex-direction:column;height:100vh;background:#f0f0f0}main{flex:1;display:flex;min-height:0}</style>
<title-bar>47007453: Exness-Real14 - Exness Technologies Ltd - [XAUUSD,M30]</title-bar><menu-bar></menu-bar><tool-bars></tool-bars>
<main><market-watch></market-watch><price-chart></price-chart></main><terminal-panel></terminal-panel><status-bar></status-bar>`);
</script>
</body>
</html>
